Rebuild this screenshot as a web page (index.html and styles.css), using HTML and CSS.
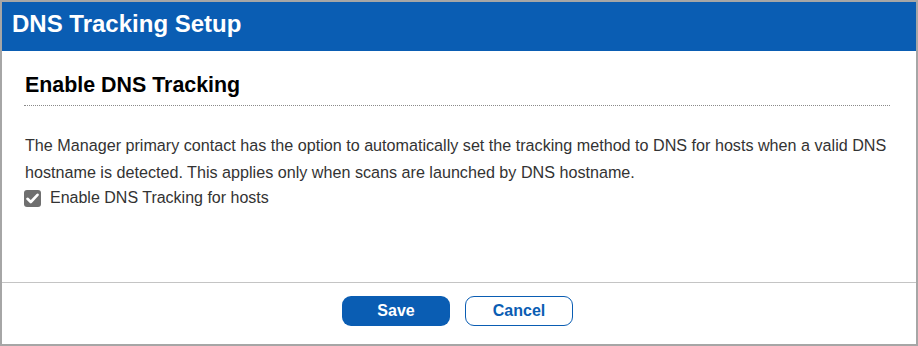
FILE: index.html
```html
<!DOCTYPE html>
<html lang="en">
<head>
  <meta charset="UTF-8">
  <title>DNS Tracking Setup</title>
  <link rel="stylesheet" href="styles.css">
</head>
<body>
  <div class="dialog">
    <div class="dialog-header">DNS Tracking Setup</div>

    <div class="dialog-body">
      <h2 class="section-title">Enable DNS Tracking</h2>
      <p class="description">The Manager primary contact has the option to automatically set the tracking method to DNS for hosts when a valid DNS hostname is detected. This applies only when scans are launched by DNS hostname.</p>
      <label class="check">
        <span class="check-box">
          <svg width="13" height="11" viewBox="0 0 13 11"><path d="M1.5 5.8 L4.8 9 L11.5 1.8" fill="none" stroke="#fff" stroke-width="2.6" stroke-linecap="round" stroke-linejoin="round"/></svg>
        </span>
        Enable DNS Tracking for hosts
      </label>
    </div>

    <div class="dialog-footer">
      <button class="btn btn-primary">Save</button>
      <button class="btn btn-secondary">Cancel</button>
    </div>
  </div>
</body>
</html>
```

FILE: styles.css
```css
body {
  margin: 0;
  font-family: "Liberation Sans", Arial, sans-serif;
}
.dialog {
  width: 918px;
  height: 346px;
  box-sizing: border-box;
  border: 2px solid #a6a6a6;
  display: flex;
  flex-direction: column;
  background: #fff;
}
.dialog-header {
  height: 49px;
  background: #0a5db3;
  color: #fff;
  font-size: 24px;
  font-weight: bold;
  line-height: 44px;
  padding-left: 10px;
}
.dialog-body {
  flex: 1;
  padding: 0 26px 0 22px;
}
.section-title {
  margin: 20px 0 0;
  padding: 0 0 6px 1px;
  font-size: 21.4px;
  line-height: 28px;
  border-bottom: 1px dotted #8a8a8a;
  color: #000;
}
.description {
  margin: 26px 0 0 1px;
  font-size: 16.15px;
  line-height: 27px;
  color: #333;
}
.check {
  display: flex;
  align-items: center;
  gap: 9px;
  font-size: 16px;
  color: #333;
  margin-top: 3px;
}
.check-box {
  width: 17px;
  height: 17px;
  border-radius: 3px;
  background: #6f6f6f;
  display: flex;
  align-items: center;
  justify-content: center;
}
.dialog-footer {
  height: 62px;
  border-top: 1px solid #c4c4c4;
  display: flex;
  justify-content: center;
  align-items: flex-start;
  gap: 15px;
  padding: 13px 3px 0 0;
  box-sizing: border-box;
}
.btn {
  width: 108px;
  height: 30px;
  border-radius: 9px;
  font-family: "Liberation Sans", Arial, sans-serif;
  font-size: 16px;
  font-weight: bold;
  cursor: pointer;
}
.btn-primary {
  background: #0a5db3;
  color: #fff;
  border: none;
}
.btn-secondary {
  background: #fff;
  color: #0a5db3;
  border: 1px solid #0a5db3;
}
```
